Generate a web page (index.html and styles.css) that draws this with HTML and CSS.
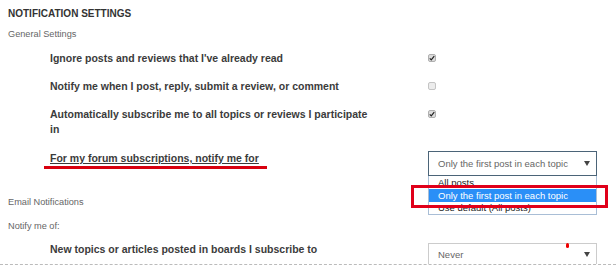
FILE: index.html
```html
<!DOCTYPE html>
<html lang="en">
<head>
    <meta charset="UTF-8">
    <title>Notification Settings</title>
    <link rel="stylesheet" href="styles.css">
</head>
<body>
    <h2 class="title">NOTIFICATION SETTINGS</h2>
    <p class="section">General Settings</p>

    <div class="row">
        <div class="label">Ignore posts and reviews that I've already read</div>
        <div class="control"><span class="check checked"><svg viewBox="0 0 8 8" width="6" height="6"><path d="M1 4.5 L3 6.5 L7 1.5" fill="none" stroke="#222" stroke-width="1.6"/></svg></span></div>
    </div>
    <div class="row">
        <div class="label">Notify me when I post, reply, submit a review, or comment</div>
        <div class="control"><span class="check"></span></div>
    </div>
    <div class="row">
        <div class="label">Automatically subscribe me to all topics or reviews I participate in</div>
        <div class="control"><span class="check checked"><svg viewBox="0 0 8 8" width="6" height="6"><path d="M1 4.5 L3 6.5 L7 1.5" fill="none" stroke="#222" stroke-width="1.6"/></svg></span></div>
    </div>
    <div class="row row-forum">
        <div class="label"><span class="marked">For my forum subscriptions, notify me for</span></div>
        <div class="control">
            <div class="select focused">
                <span>Only the first post in each topic</span>
                <span class="arrow"></span>
                <ul class="options">
                    <li>All posts</li>
                    <li class="active">Only the first post in each topic</li>
                    <li>Use default (All posts)</li>
                </ul>
                <div class="callout"></div>
            </div>
        </div>
    </div>

    <p class="section section-email">Email Notifications</p>
    <p class="section section-notify">Notify me of:</p>

    <div class="row row-last">
        <div class="label">New topics or articles posted in boards I subscribe to</div>
        <div class="control">
            <div class="select select-never">
                <span>Never</span>
                <span class="arrow"></span>
                <span class="dot"></span>
            </div>
        </div>
    </div>
</body>
</html>
```

FILE: styles.css
```css
body {
    margin: 0;
    padding: 8px 8px 0;
    font-family: "Liberation Sans", Arial, sans-serif;
    color: #333;
    background: #fff;
    overflow: hidden;
}
.title {
    font-size: 10px;
    font-weight: bold;
    margin: 0;
    line-height: 12px;
    color: #333;
}
.section {
    font-size: 9.2px;
    color: #666;
    margin: 8px 0 0;
    line-height: 12px;
}
.section-email {
    margin-top: 20px;
}
.section-notify {
    margin-top: 12px;
}
.row {
    display: flex;
    align-items: flex-start;
    padding-left: 42px;
    margin-top: 13px;
}
.row:first-of-type {
    margin-top: 11px;
}
.label {
    width: 325px;
    flex: none;
    font-size: 10.5px;
    font-weight: bold;
    color: #3b3b3b;
    line-height: 15px;
}
.control {
    margin-left: 53px;
}
.check {
    display: flex;
    align-items: center;
    justify-content: center;
    box-sizing: border-box;
    width: 8px;
    height: 8px;
    margin-top: 2.5px;
    border: 1px solid #c4c4c4;
    border-radius: 2px;
    background: #ececec;
}
.check.checked {
    background: #dcdcdc;
    border-color: #b0b0b0;
}
.row-forum {
    margin-top: 14px;
}
.marked {
    position: relative;
    text-decoration: underline;
    text-underline-offset: 1px;
}
.marked::after {
    content: "";
    position: absolute;
    left: -6px;
    right: -8px;
    top: 14px;
    height: 3px;
    background: #d8000f;
}
.select {
    position: relative;
    box-sizing: border-box;
    width: 169px;
    height: 25px;
    border: 1px solid #ccc;
    padding: 0 6px 0 9px;
    display: flex;
    align-items: center;
    justify-content: space-between;
    font-size: 9.5px;
    color: #666;
}
.select.focused {
    border-color: #4b6478;
}
.arrow {
    width: 0;
    height: 0;
    border-left: 3px solid transparent;
    border-right: 3px solid transparent;
    border-top: 5px solid #444;
}
.options {
    position: absolute;
    left: -1px;
    top: 24px;
    box-sizing: border-box;
    width: 169px;
    margin: 0;
    padding: 0;
    list-style: none;
    border: 1px solid #a9bed6;
    border-top: none;
    background: #fff;
    z-index: 2;
}
.options li {
    font-size: 9.5px;
    height: 13px;
    line-height: 13px;
    padding-left: 9px;
    color: #222;
}
.options li:last-child {
    height: 12px;
    line-height: 11px;
}
.options li.active {
    background: #2a8ff7;
    color: #fff;
}
.callout {
    position: absolute;
    left: -18px;
    top: 33px;
    box-sizing: border-box;
    width: 197px;
    height: 23px;
    border: 3px solid #e0001a;
    z-index: 3;
}
.row-last {
    margin-top: 10px;
    margin-left: -8px;
    margin-right: -8px;
    padding-left: 50px;
    border-bottom: 1px dashed #bbb;
}
.select-never {
    margin-top: 1px;
    height: 21px;
    border-bottom: none;
}
.dot {
    position: absolute;
    left: 137px;
    top: -1px;
    width: 3px;
    height: 5px;
    border-radius: 2px;
    background: #e00;
}
```
